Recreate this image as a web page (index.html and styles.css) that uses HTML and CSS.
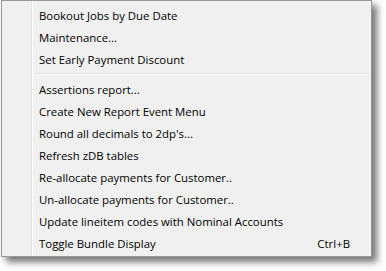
FILE: index.html
```html
<!DOCTYPE html>
<html lang="en">
<head>
    <meta charset="UTF-8">
    <title>Context Menu</title>
    <link rel="stylesheet" href="styles.css">
</head>
<body>
    <div class="menu">
        <div class="menu-item">Bookout Jobs by Due Date</div>
        <div class="menu-item">Maintenance...</div>
        <div class="menu-item">Set Early Payment Discount</div>
        <div class="menu-separator"></div>
        <div class="menu-item">Assertions report...</div>
        <div class="menu-item">Create New Report Event Menu</div>
        <div class="menu-item">Round all decimals to 2dp's...</div>
        <div class="menu-item">Refresh zDB tables</div>
        <div class="menu-item">Re-allocate payments for Customer..</div>
        <div class="menu-item">Un-allocate payments for Customer..</div>
        <div class="menu-item">Update lineitem codes with Nominal Accounts</div>
        <div class="menu-item">
            <span>Toggle Bundle Display</span>
            <span class="shortcut">Ctrl+B</span>
        </div>
    </div>
</body>
</html>
```

FILE: styles.css
```css
body {
    margin: 0;
    padding: 0 0 0 1px;
    min-height: 100vh;
    box-sizing: border-box;
    background-color: #fff;
    font-family: "Open Sans", "Liberation Sans", sans-serif;
    font-size: 11.4px;
    color: #000;
}
.menu {
    width: 365px;
    padding: 3px 2px 2px 2px;
    border: 1px solid #979797;
    background-color: #f0f0f0;
    background-image: linear-gradient(to right, transparent 29px, #e2e3e3 29px, #e2e3e3 30px, #fff 30px, #fff 31px, transparent 31px);
    box-shadow: 5px 5px 7px rgba(0, 0, 0, 0.55);
}
.menu-item {
    display: flex;
    justify-content: space-between;
    align-items: center;
    height: 22px;
    padding: 0 19px 0 35px;
    white-space: nowrap;
}
.menu-separator {
    height: 0;
    margin: 3px 0 3px 31px;
    border-top: 1px solid #e0e0e0;
    border-bottom: 1px solid #fff;
}
```
